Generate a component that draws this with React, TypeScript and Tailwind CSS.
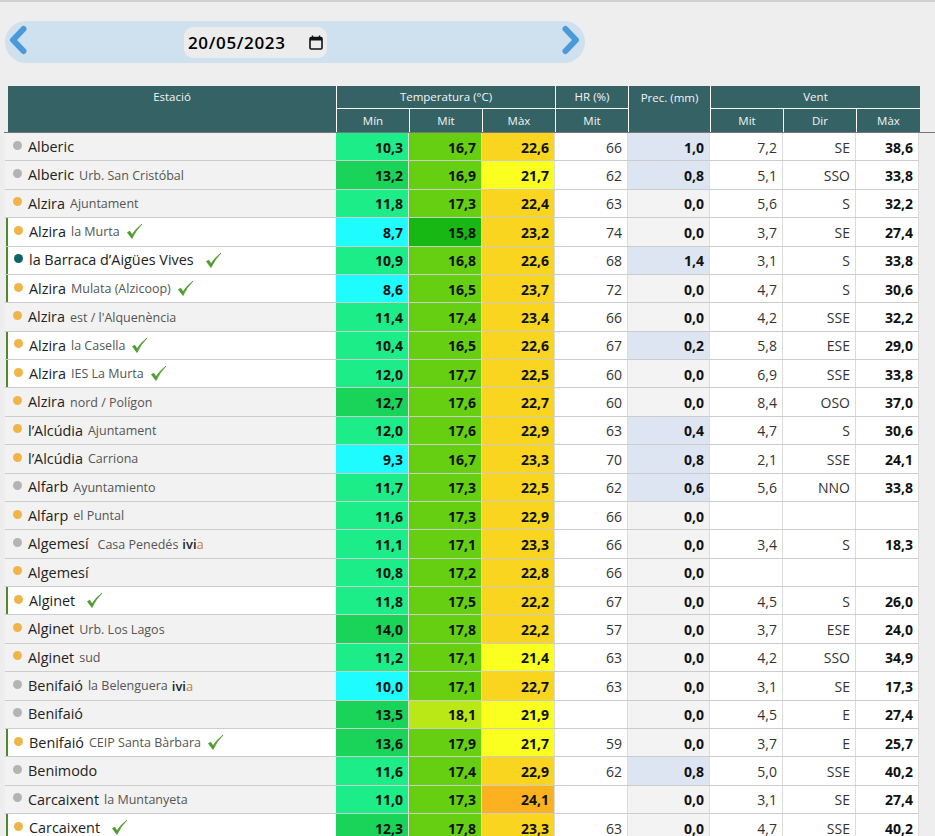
const FONT = "font-['Open_Sans',sans-serif]";

type Row = {
  dot: 'g' | 'o' | 't';
  name: string;
  sub?: string;
  gap?: string;
  ivia?: boolean;
  check?: number;
  v: (string)[];
};

const rows: Row[] = [
  { dot: 'g', name: 'Alberic', v: ['10,3', '16,7', '22,6', '66', '1,0', '7,2', 'SE', '38,6'] },
  { dot: 'g', name: 'Alberic', sub: 'Urb. San Cristóbal', v: ['13,2', '16,9', '21,7', '62', '0,8', '5,1', 'SSO', '33,8'] },
  { dot: 'o', name: 'Alzira', sub: 'Ajuntament', v: ['11,8', '17,3', '22,4', '63', '0,0', '5,6', 'S', '32,2'] },
  { dot: 'o', name: 'Alzira', sub: 'la Murta', check: 1, v: ['8,7', '15,8', '23,2', '74', '0,0', '3,7', 'SE', '27,4'] },
  { dot: 't', name: 'la Barraca d’Aigües Vives', check: 2, v: ['10,9', '16,8', '22,6', '68', '1,4', '3,1', 'S', '33,8'] },
  { dot: 'o', name: 'Alzira', sub: 'Mulata (Alzicoop)', check: 1, v: ['8,6', '16,5', '23,7', '72', '0,0', '4,7', 'S', '30,6'] },
  { dot: 'o', name: 'Alzira', sub: 'est / l\'Alquenència', v: ['11,4', '17,4', '23,4', '66', '0,0', '4,2', 'SSE', '32,2'] },
  { dot: 'o', name: 'Alzira', sub: 'la Casella', check: 1, v: ['10,4', '16,5', '22,6', '67', '0,2', '5,8', 'ESE', '29,0'] },
  { dot: 'o', name: 'Alzira', sub: 'IES La Murta', check: 1, v: ['12,0', '17,7', '22,5', '60', '0,0', '6,9', 'SSE', '33,8'] },
  { dot: 'o', name: 'Alzira', sub: 'nord / Polígon', v: ['12,7', '17,6', '22,7', '60', '0,0', '8,4', 'OSO', '37,0'] },
  { dot: 'o', name: 'l’Alcúdia', sub: 'Ajuntament', v: ['12,0', '17,6', '22,9', '63', '0,4', '4,7', 'S', '30,6'] },
  { dot: 'o', name: 'l’Alcúdia', sub: 'Carriona', v: ['9,3', '16,7', '23,3', '70', '0,8', '2,1', 'SSE', '24,1'] },
  { dot: 'g', name: 'Alfarb', sub: 'Ayuntamiento', v: ['11,7', '17,3', '22,5', '62', '0,6', '5,6', 'NNO', '33,8'] },
  { dot: 'o', name: 'Alfarp', sub: 'el Puntal', v: ['11,6', '17,3', '22,9', '66', '0,0', '', '', ''] },
  { dot: 'g', name: 'Algemesí', sub: 'Casa Penedés', gap: 'ml-[9px]', ivia: true, v: ['11,1', '17,1', '23,3', '66', '0,0', '3,4', 'S', '18,3'] },
  { dot: 'o', name: 'Algemesí', v: ['10,8', '17,2', '22,8', '66', '0,0', '', '', ''] },
  { dot: 'o', name: 'Alginet', check: 3, v: ['11,8', '17,5', '22,2', '67', '0,0', '4,5', 'S', '26,0'] },
  { dot: 'o', name: 'Alginet', sub: 'Urb. Los Lagos', v: ['14,0', '17,8', '22,2', '57', '0,0', '3,7', 'ESE', '24,0'] },
  { dot: 'o', name: 'Alginet', sub: 'sud', v: ['11,2', '17,1', '21,4', '63', '0,0', '4,2', 'SSO', '34,9'] },
  { dot: 'g', name: 'Benifaió', sub: 'la Belenguera', ivia: true, v: ['10,0', '17,1', '22,7', '63', '0,0', '3,1', 'SE', '17,3'] },
  { dot: 'g', name: 'Benifaió', v: ['13,5', '18,1', '21,9', '', '0,0', '4,5', 'E', '27,4'] },
  { dot: 'o', name: 'Benifaió', sub: 'CEIP Santa Bàrbara', check: 1, v: ['13,6', '17,9', '21,7', '59', '0,0', '3,7', 'E', '25,7'] },
  { dot: 'g', name: 'Benimodo', v: ['11,6', '17,4', '22,9', '62', '0,8', '5,0', 'SSE', '40,2'] },
  { dot: 'g', name: 'Carcaixent', sub: 'la Muntanyeta', v: ['11,0', '17,3', '24,1', '', '0,0', '3,1', 'SE', '27,4'] },
  { dot: 'o', name: 'Carcaixent', check: 3, v: ['12,3', '17,8', '23,3', '63', '0,0', '4,7', 'SSE', '40,2'] },
];

const num = (s: string) => parseFloat(s.replace(',', '.'));

const minClass = (s: string) => {
  const n = num(s);
  if (n <= 10) return 'bg-[#1efcff]';
  if (n <= 12.1) return 'bg-[#1ced88]';
  return 'bg-[#1ad45a]';
};
const midClass = (s: string) => {
  const n = num(s);
  if (n < 16) return 'bg-[#17b814]';
  if (n >= 18) return 'bg-[#b9e816]';
  return 'bg-[#66cf12]';
};
const maxClass = (s: string) => {
  const n = num(s);
  if (n < 22) return 'bg-[#fbff20]';
  if (n >= 24) return 'bg-[#fbb120]';
  return 'bg-[#fad520]';
};

function Check() {
  return (
    <svg width="17" height="17" viewBox="0 0 17 17" className="shrink-0">
      <path d="M1.5 9.5 L6 15.5 Q9.5 7.5 16 1 Q9.5 6 6 11.8 L3.8 8.2 Z" fill="#4f9a2e" stroke="#4f9a2e" strokeWidth="0.8" strokeLinejoin="round" />
    </svg>
  );
}

function Chevron({ flip }: { flip?: boolean }) {
  return (
    <svg width="20" height="30" viewBox="0 0 20 30" className={flip ? 'ml-auto rotate-180' : ''}>
      <path d="M15.5 4 L5 15 L15.5 26" fill="none" stroke="#4a9ad9" strokeWidth="6" strokeLinecap="round" strokeLinejoin="round" />
    </svg>
  );
}

function Cell({ children, w, bg, bold }: { children?: React.ReactNode; w: string; bg: string; bold?: boolean }) {
  return (
    <div className={`${w} ${bg} ${bold ? 'font-bold text-[#111]' : 'text-[#333]'} flex h-full shrink-0 items-center justify-end border-r border-[#dcdcdc] pr-[5px] pt-[1px] text-[14px]`}>
      {children}
    </div>
  );
}

function StationRow({ r }: { r: Row }) {
  const white = !!r.check;
  return (
    <div className="flex h-[28.375px] border-b border-[#cccccc]">
      <div className={`flex h-full shrink-0 items-center ${white ? 'ml-[1px] w-[330px] border-l-2 border-[#4f8a2a] bg-white pl-[6px]' : 'w-[331px] bg-[#f2f2f2] pl-[8px]'} pr-1`}>
        <span className={`mb-[3px] h-[9px] w-[9px] shrink-0 rounded-full ${r.dot === 'g' ? 'bg-[#b4b4b4]' : r.dot === 'o' ? 'bg-[#f0b548]' : 'bg-[#0f6468]'}`} />
        <span className="ml-[6px] text-[14.4px] text-[#222]">{r.name}</span>
        {r.sub && <span className={`${r.gap ?? 'ml-[5px]'} pt-[2px] text-[12.5px] text-[#555]`}>{r.sub}</span>}
        {r.ivia && (
          <span className="ml-[4px] pt-[2px] text-[13px] font-semibold text-[#222]">
            ivi<span className="font-normal text-[#c5812f]">a</span>
          </span>
        )}
        {r.check === 1 && <span className="ml-[6px]"><Check /></span>}
        {r.check === 2 && <span className="ml-[11px]"><Check /></span>}
        {r.check === 3 && <span className="ml-[11px]"><Check /></span>}
      </div>
      <Cell w="w-[73px]" bg={minClass(r.v[0])} bold>{r.v[0]}</Cell>
      <Cell w="w-[73px]" bg={midClass(r.v[1])} bold>{r.v[1]}</Cell>
      <Cell w="w-[73px]" bg={maxClass(r.v[2])} bold>{r.v[2]}</Cell>
      <Cell w="w-[73px]" bg="bg-white">{r.v[3]}</Cell>
      <Cell w="w-[82px]" bg={r.v[4] === '0,0' ? 'bg-[#f3f3f3]' : 'bg-[#dde5f3]'} bold>{r.v[4]}</Cell>
      <Cell w="w-[73px]" bg="bg-white">{r.v[5]}</Cell>
      <Cell w="w-[73px]" bg="bg-white">{r.v[6]}</Cell>
      <Cell w="w-[63px]" bg="bg-white" bold>{r.v[7]}</Cell>
    </div>
  );
}

function Head({ w, children, right }: { w: string; children?: React.ReactNode; right?: boolean }) {
  return (
    <div className={`${w} flex h-full shrink-0 items-center justify-center ${right ? 'border-r border-white' : ''}`}>
      {children}
    </div>
  );
}

export default function App() {
  return (
    <div className={`${FONT} h-[836px] w-[935px] overflow-hidden border-t-2 border-[#d0d0d0] bg-[#eeeeee]`}>
      <div className="ml-[5px] mt-[19px] flex h-[42px] w-[580px] items-center rounded-[21px] bg-[#cfe0ee] pb-1 pl-[3px] pr-[4px]">
        <Chevron />
        <div className="ml-[156px] mt-1 flex h-[31px] w-[143px] items-center justify-between rounded-[9px] bg-[#ececec] pl-[4px] pr-[3px] pt-[1px]">
          <span className="text-[17px] font-semibold tracking-[0.65px] text-black">20/05/2023</span>
          <svg width="14" height="15" viewBox="0 0 14 15" fill="none" className="mr-[1px]">
            <rect x="1" y="2.5" width="12" height="11.5" rx="1.2" stroke="#111" strokeWidth="1.6" />
            <rect x="1" y="2.5" width="12" height="3" fill="#111" />
            <path d="M3.5 0.5 V3 M10.5 0.5 V3" stroke="#111" strokeWidth="1.4" />
          </svg>
        </div>
        <Chevron flip />
      </div>

      <div className="ml-[8px] mt-[23px] flex h-[46px] w-[912px] flex-col bg-[#356365] text-[11.5px] text-[#f4f4f4]">
        <div className="flex h-[23px] shrink-0">
          <Head w="w-[329px]" right><span className="-mt-[1px]">Estació</span></Head>
          <div className="flex h-[23px] w-[219px] items-center justify-center border-b border-r border-white">Temperatura (°C)</div>
          <div className="flex h-[23px] w-[73px] items-center justify-center border-b border-r border-white">HR (%)</div>
          <div className="flex h-[23px] w-[82px] items-center justify-center border-r border-white">Prec. (mm)</div>
          <div className="flex h-[23px] flex-1 items-center justify-center border-b border-white">Vent</div>
        </div>
        <div className="flex h-[23px] shrink-0">
          <Head w="w-[329px]" right />
          <Head w="w-[73px]" right>Mín</Head>
          <Head w="w-[73px]" right>Mit</Head>
          <Head w="w-[73px]" right>Màx</Head>
          <Head w="w-[73px]" right>Mit</Head>
          <Head w="w-[82px]" right />
          <Head w="w-[73px]" right>Mit</Head>
          <Head w="w-[73px]" right>Dir</Head>
          <Head w="w-[63px]">Màx</Head>
        </div>
      </div>
      <div className="ml-[4px] h-[1px] bg-[#777777]" />
      <div className="ml-[5px] w-[914px]">
        {rows.map((r, i) => (
          <StationRow key={i} r={r} />
        ))}
      </div>
    </div>
  );
}
